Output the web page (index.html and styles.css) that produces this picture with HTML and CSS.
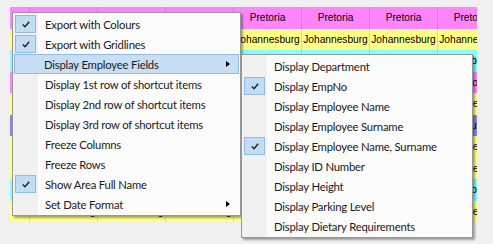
FILE: index.html
```html
<!DOCTYPE html>
<html lang="en">
<head>
  <meta charset="UTF-8" />
  <title>Grid context menu</title>
  <link rel="stylesheet" href="styles.css">
</head>
<body>
  <div class="grid">
    <div class="row pink">
      <span class="cell stub"></span><span class="cell">Pretoria</span><span class="cell">Pretoria</span><span class="cell">Pretoria</span><span class="cell">Pretoria</span><span class="cell">Pretoria</span><span class="cell">Pretoria</span><span class="cell">Pretoria</span>
    </div>
    <div class="row yellow">
      <span class="cell stub"></span><span class="cell">Johannesburg</span><span class="cell">Johannesburg</span><span class="cell">Johannesburg</span><span class="cell">Johannesburg</span><span class="cell">Johannesburg</span><span class="cell">Johannesburg</span><span class="cell">Johannesburg</span>
    </div>
    <div class="row cyan">
      <span class="cell stub"></span><span class="cell">Durban</span><span class="cell">Durban</span><span class="cell">Durban</span><span class="cell">Durban</span><span class="cell">Durban</span><span class="cell">Durban</span><span class="cell">Durban</span>
    </div>
    <div class="row pink">
      <span class="cell stub"></span><span class="cell">Pretoria</span><span class="cell">Pretoria</span><span class="cell">Pretoria</span><span class="cell">Pretoria</span><span class="cell">Pretoria</span><span class="cell">Pretoria</span><span class="cell">Pretoria</span>
    </div>
    <div class="row yellow">
      <span class="cell stub"></span><span class="cell">Johannesburg</span><span class="cell">Johannesburg</span><span class="cell">Johannesburg</span><span class="cell">Johannesburg</span><span class="cell">Johannesburg</span><span class="cell">Johannesburg</span><span class="cell">Johannesburg</span>
    </div>
    <div class="row blue">
      <span class="cell stub"></span><span class="cell">Centurion</span><span class="cell">Centurion</span><span class="cell">Centurion</span><span class="cell">Centurion</span><span class="cell">Centurion</span><span class="cell">Centurion</span><span class="cell">Centurion</span>
    </div>
    <div class="row yellow">
      <span class="cell stub"></span><span class="cell">Johannesburg</span><span class="cell">Johannesburg</span><span class="cell">Johannesburg</span><span class="cell">Johannesburg</span><span class="cell">Johannesburg</span><span class="cell">Johannesburg</span><span class="cell">Johannesburg</span>
    </div>
    <div class="row yellow">
      <span class="cell stub"></span><span class="cell">Johannesburg</span><span class="cell">Johannesburg</span><span class="cell">Johannesburg</span><span class="cell">Johannesburg</span><span class="cell">Johannesburg</span><span class="cell">Johannesburg</span><span class="cell">Johannesburg</span>
    </div>
    <div class="row cyan">
      <span class="cell stub"></span><span class="cell">Durban</span><span class="cell">Durban</span><span class="cell">Durban</span><span class="cell">Durban</span><span class="cell">Durban</span><span class="cell">Durban</span><span class="cell">Durban</span>
    </div>
    <div class="row yellow">
      <span class="cell stub"></span><span class="cell">Johannesburg</span><span class="cell">Johannesburg</span><span class="cell">Johannesburg</span><span class="cell">Johannesburg</span><span class="cell">Johannesburg</span><span class="cell">Johannesburg</span><span class="cell">Johannesburg</span>
    </div>
  </div>

  <div class="menu main-menu">
    <div class="item checked"><span class="check"><svg viewBox="0 0 8 7" width="8" height="7"><path d="M0.8 3.6 L3 5.8 L7.2 0.8" /></svg></span><span class="label">Export with Colours</span></div>
    <div class="item checked"><span class="check"><svg viewBox="0 0 8 7" width="8" height="7"><path d="M0.8 3.6 L3 5.8 L7.2 0.8" /></svg></span><span class="label">Export with Gridlines</span></div>
    <div class="item active"><span class="check"></span><span class="label">Display Employee Fields</span><span class="arrow"></span></div>
    <div class="item"><span class="check"></span><span class="label">Display 1st row of shortcut items</span></div>
    <div class="item"><span class="check"></span><span class="label">Display 2nd row of shortcut items</span></div>
    <div class="item"><span class="check"></span><span class="label">Display 3rd row of shortcut items</span></div>
    <div class="item"><span class="check"></span><span class="label">Freeze Columns</span></div>
    <div class="item"><span class="check"></span><span class="label">Freeze Rows</span></div>
    <div class="item checked"><span class="check"><svg viewBox="0 0 8 7" width="8" height="7"><path d="M0.8 3.6 L3 5.8 L7.2 0.8" /></svg></span><span class="label">Show Area Full Name</span></div>
    <div class="item"><span class="check"></span><span class="label">Set Date Format</span><span class="arrow"></span></div>
  </div>

  <div class="menu sub-menu">
    <div class="item"><span class="check"></span><span class="label">Display Department</span></div>
    <div class="item checked"><span class="check"><svg viewBox="0 0 8 7" width="8" height="7"><path d="M0.8 3.6 L3 5.8 L7.2 0.8" /></svg></span><span class="label">Display EmpNo</span></div>
    <div class="item"><span class="check"></span><span class="label">Display Employee Name</span></div>
    <div class="item"><span class="check"></span><span class="label">Display Employee Surname</span></div>
    <div class="item checked"><span class="check"><svg viewBox="0 0 8 7" width="8" height="7"><path d="M0.8 3.6 L3 5.8 L7.2 0.8" /></svg></span><span class="label">Display Employee Name, Surname</span></div>
    <div class="item"><span class="check"></span><span class="label">Display ID Number</span></div>
    <div class="item"><span class="check"></span><span class="label">Display Height</span></div>
    <div class="item"><span class="check"></span><span class="label">Display Parking Level</span></div>
    <div class="item"><span class="check"></span><span class="label">Display Dietary Requirements</span></div>
  </div>
</body>
</html>
```

FILE: styles.css
```css
body {
  margin: 0;
  background: #f0f0f0;
  font-family: Lato, "Open Sans", sans-serif;
  position: relative;
  height: 244px;
  overflow: hidden;
}
.grid {
  margin: 7px 0 0 10px;
  width: 467px;
  overflow: hidden;
  font-family: "Liberation Sans", Arial, sans-serif;
  font-size: 10.2px;
  color: #000;
}
.row {
  display: flex;
  height: 21.5px;
  white-space: nowrap;
}
.cell {
  flex: 0 0 68px;
  box-sizing: border-box;
  border-right: 1px solid rgba(0, 0, 0, 0.12);
  display: flex;
  align-items: center;
  justify-content: center;
  overflow: hidden;
}
.cell.stub {
  flex-basis: 20px;
}
.pink { background: #ff85ff; }
.yellow { background: #ffff85; }
.cyan { background: #85ffff; }
.blue { background: #8585f0; }

/* context menus */
.menu {
  position: absolute;
  box-sizing: border-box;
  background: #fcfcfc;
  border: 1px solid #979797;
  padding: 1px;
  box-shadow: 2px 2px 2px rgba(0, 0, 0, 0.35);
  font-size: 11.3px;
  letter-spacing: -0.2px;
  color: #1a1a1a;
}
.menu::before {
  content: "";
  position: absolute;
  top: 0;
  bottom: 0;
  left: 0;
  width: 25px;
  background: #f1f1f1;
}
.main-menu {
  left: 12px;
  top: 12px;
  width: 229px;
}
.sub-menu {
  left: 241px;
  top: 54px;
  width: 232px;
}
.item {
  position: relative;
  display: flex;
  align-items: center;
  height: 20px;
  box-sizing: border-box;
  border: 1px solid transparent;
}
.item.active {
  background: #c8def4;
  border-color: #8fbbe6;
}
.check {
  flex: 0 0 21px;
  height: 18px;
  box-sizing: border-box;
  display: flex;
  align-items: center;
  justify-content: center;
}
.item.active .check {
  margin-left: -1px;
}
.checked .check {
  background: #c2dcf4;
  border: 1px solid #8ebde8;
}
.check svg path {
  fill: none;
  stroke: #1e1e1e;
  stroke-width: 1.4;
}
.label {
  padding-left: 9px;
  white-space: nowrap;
}
.arrow {
  margin-left: auto;
  margin-right: 8px;
  width: 0;
  height: 0;
  border-top: 3.5px solid transparent;
  border-bottom: 3.5px solid transparent;
  border-left: 4px solid #000;
}
```
